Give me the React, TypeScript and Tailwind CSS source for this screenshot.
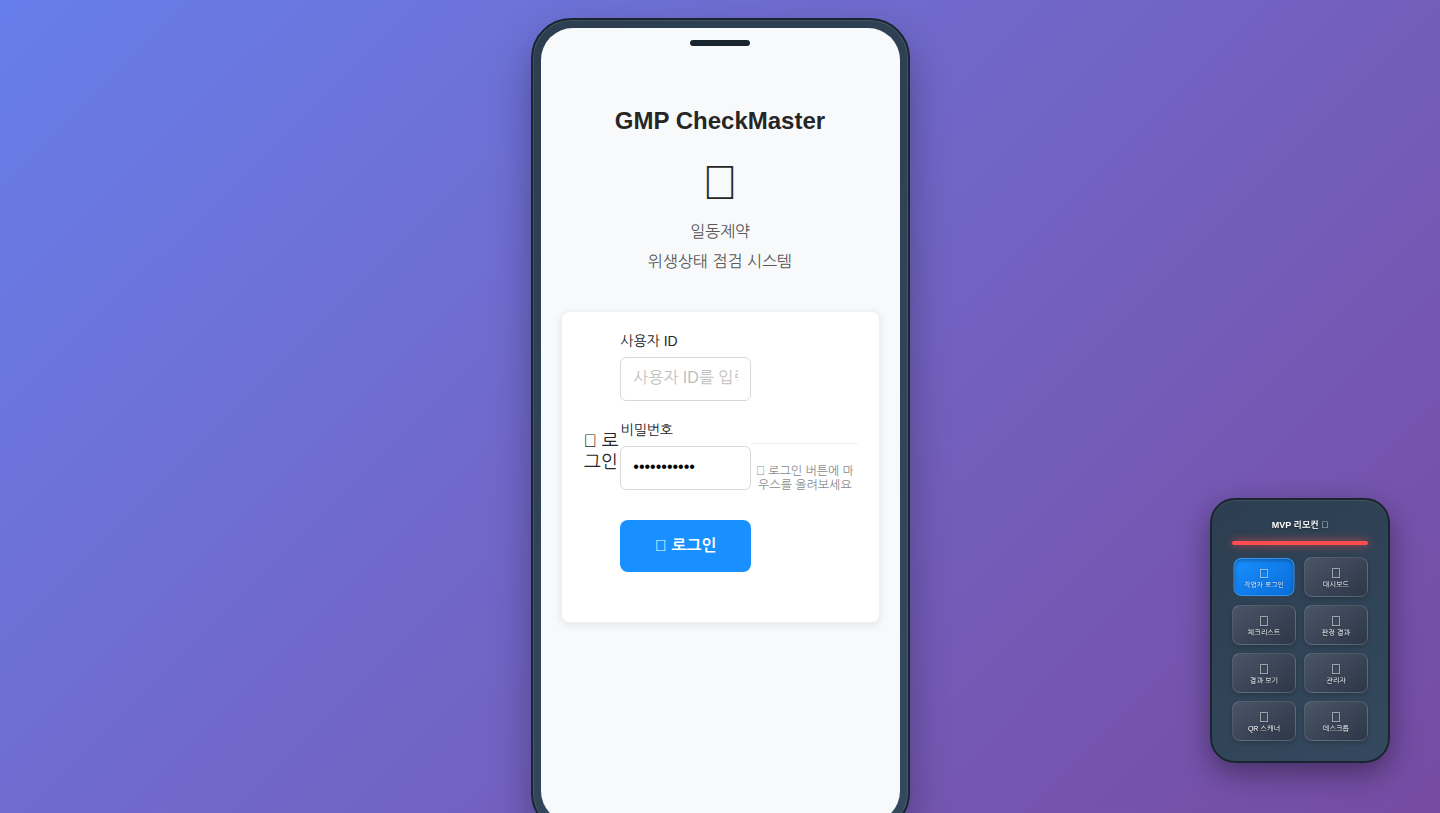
const glyph = "\u{10FFF0}";

const remoteButtons = [
  { label: "작업자 로그인", active: true },
  { label: "대시보드" },
  { label: "체크리스트" },
  { label: "판정 결과" },
  { label: "결과 보기" },
  { label: "관리자" },
  { label: "QR 스캐너" },
  { label: "데스크톱" },
];

const remoteButtonBase =
  "flex h-10 flex-col items-center justify-center rounded-[8px] border font-medium text-white [text-shadow:0_1px_2px_rgba(0,0,0,0.5)]";

const inputClass =
  "h-11 w-full rounded-[6px] border border-[#d9d9d9] bg-white px-3 pb-[2px] text-[16px] text-black placeholder:text-[#bfbfbf]";

function LoginCard() {
  return (
    <section className="flex h-[312px] items-center rounded-[8px] border border-[#f0f0f0] bg-white p-5 shadow-[0_2px_8px_rgba(0,0,0,0.09)]">
      <h2 className="mb-[30px] w-[38.8px] shrink-0 text-center text-[18px] leading-[21px] text-[#262626]">
        {glyph} 로그인
      </h2>
      <form className="flex h-[270px] w-[131px] shrink-0 flex-col">
        <label className="h-[25px] pt-px text-[14px] leading-[16px] text-[#262626]">사용자 ID</label>
        <input type="text" placeholder="사용자 ID를 입력하세요" className={`mb-5 ${inputClass}`} />
        <label className="h-[25px] pt-px text-[14px] leading-[16px] text-[#262626]">비밀번호</label>
        <input type="password" defaultValue="password123" className={`mb-[30px] ${inputClass}`} />
        <button
          type="button"
          className="h-[52px] w-full rounded-[8px] bg-[#1890ff] text-[16px] font-semibold text-white"
        >
          {glyph} 로그인
        </button>
      </form>
      <p className="mt-[1px] h-[49px] w-[107.2px] shrink-0 border-t border-[#f0f0f0] pt-5 text-center text-[12px] leading-[14px] text-[#8c8c8c]">
        {glyph} 로그인 버튼에 마우스를 올려보세요
      </p>
    </section>
  );
}

function Phone() {
  return (
    <div className="relative h-[815px] w-[379px] shrink-0 rounded-[40px] border-2 border-[#1a252f] bg-linear-145 from-[#2c3e50] to-[#34495e] p-2 shadow-[0_20px_40px_rgba(0,0,0,0.3),inset_0_1px_0_rgba(255,255,255,0.1),inset_1px_0_0_rgba(255,255,255,0.1),inset_-1px_0_0_rgba(255,255,255,0.1)]">
      <main className="h-full rounded-[32px] bg-[#f8f9fb] px-5 pt-[76px] text-center">
        <h1 className="text-[24px] leading-[34px] font-bold text-[#262626]">GMP CheckMaster</h1>
        <div className="mt-[17px] text-[48px] leading-[56px] text-[#262626]">{glyph}</div>
        <p className="mt-[6px] text-[16px] leading-[30px] text-[#595959]">
          일동제약
          <br />
          위생상태 점검 시스템
        </p>
        <div className="mt-[34px] text-left">
          <LoginCard />
        </div>
      </main>
      <div className="absolute top-5 left-1/2 h-[6px] w-[60px] -translate-x-1/2 rounded-[3px] bg-[#1a252f]" />
    </div>
  );
}

function Remote() {
  return (
    <aside className="fixed right-[50px] bottom-[50px] h-[265px] w-[180px] rounded-[25px] border-2 border-[#1a252f] bg-linear-145 from-[#2c3e50] to-[#34495e] p-5 shadow-[0_10px_30px_rgba(0,0,0,0.4),inset_0_1px_0_rgba(255,255,255,0.1)]">
      <h2 className="h-[21px] text-center text-[9px] leading-[10px] font-bold text-white [text-shadow:0_1px_2px_rgba(0,0,0,0.5)]">
        MVP 리모컨 {glyph}
      </h2>
      <div className="mb-3 h-1 rounded-[2px] bg-[#ff4d4f] shadow-[0_0_8px_rgba(255,77,79,0.8)]" />
      <div className="grid grid-cols-2 gap-2">
        {remoteButtons.map((button) => (
          <button
            key={button.label}
            className={
              button.active
                ? `${remoteButtonBase} scale-95 border-[#3b9cf8] bg-linear-145 from-[#1890ff] to-[#096dd9] shadow-[inset_0_2px_4px_rgba(0,0,0,0.3)]`
                : `${remoteButtonBase} border-white/15 bg-linear-145 from-[#4a5568] to-[#2d3748] shadow-[0_2px_4px_rgba(0,0,0,0.2)]`
            }
          >
            <span className="mb-px text-[14px] leading-[14px] opacity-90">{glyph}</span>
            <span className="text-[7px] leading-[8px] font-medium whitespace-nowrap">{button.label}</span>
          </button>
        ))}
      </div>
    </aside>
  );
}

export default function App() {
  return (
    <div className="flex h-[813px] justify-center overflow-hidden bg-linear-135 from-[#667eea] to-[#764ba2] pt-[18px] font-['Liberation_Sans','NanumGothic','Noto_Sans_CJK_KR',sans-serif]">
      <Phone />
      <Remote />
    </div>
  );
}
